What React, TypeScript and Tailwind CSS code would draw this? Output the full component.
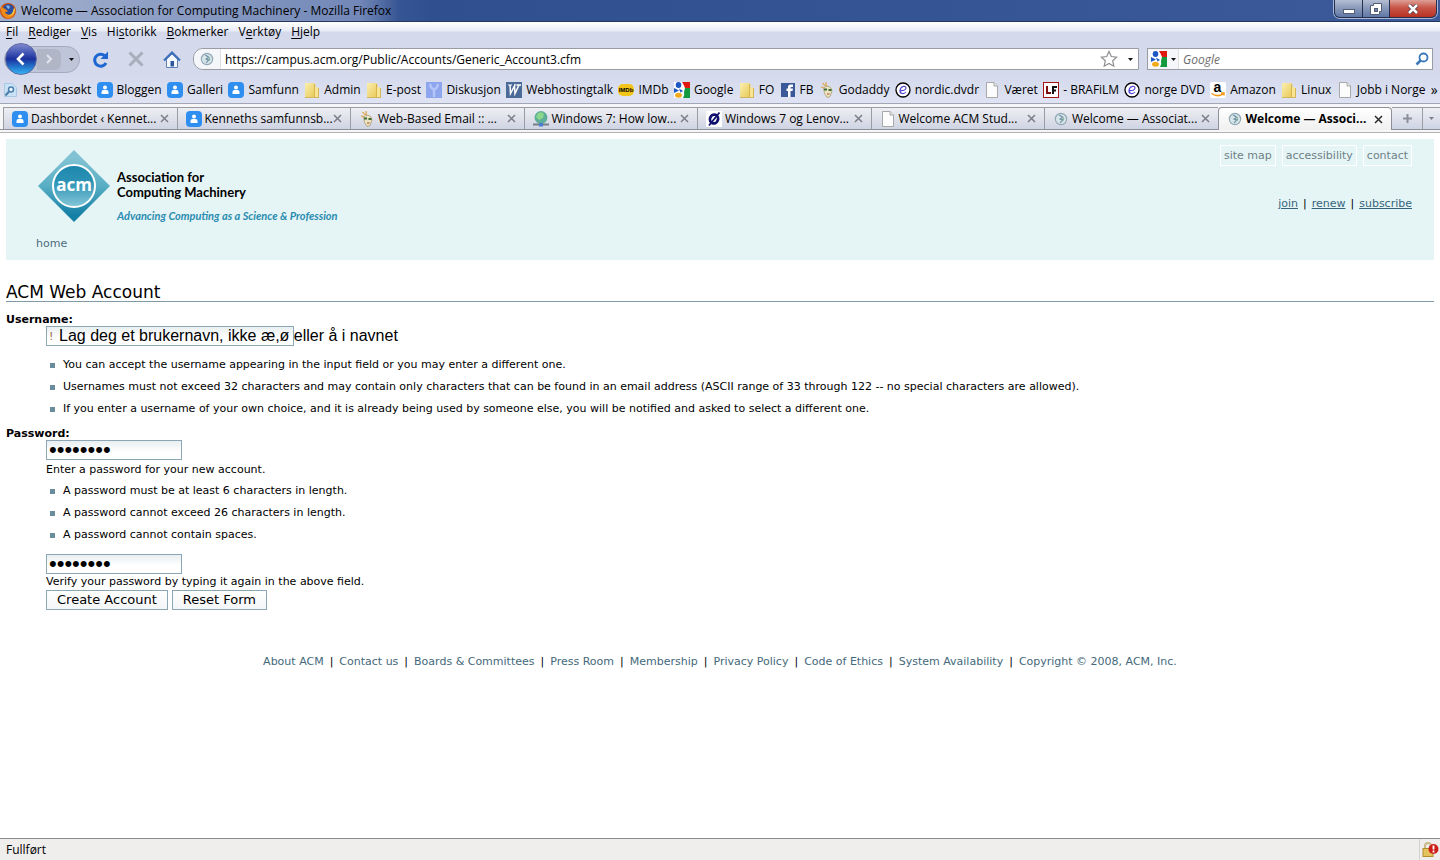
import type { ReactNode } from "react";

/* ---------- small icons ---------- */

function FirefoxIcon() {
  return (
    <svg width="16" height="16" viewBox="0 0 16 16">
      <circle cx="8" cy="8" r="8" fill="#c9510f" />
      <circle cx="8.500" cy="6.500" r="5.500" fill="#2b4f9e" />
      <path d="M6 3c2-1 4 0 4 1s-1 2-2 2z" fill="#7fb2e8" />
      <path d="M1 3C0 8 2 14 8 15.500c5-.5 8-5 7-10-1 3-2 5-4.500 6C8 12 5.500 11 5 9l3-.5c0-1.500-2-1-2.500-2.500C4 5.500 2.500 5 1 3z" fill="#f08a1c" />
      <path d="M15 5c0 5-3 8-7 8 3-1 5-3 5.500-7z" fill="#fbd04a" />
    </svg>
  );
}

function PersonIcon() {
  return (
    <svg width="16" height="16" viewBox="0 0 16 16">
      <rect width="16" height="16" rx="4" fill="#2f8ff0" />
      <circle cx="8" cy="5.500" r="2" fill="#fff" />
      <path d="M4.500 12V10Q4.500 8 6.500 8h3Q11.500 8 11.500 10v2z" fill="#fff" />
    </svg>
  );
}

function FolderIcon() {
  return (
    <svg width="16" height="16" viewBox="0 0 16 16">
      <defs>
        <linearGradient id="folder" x1="0" y1="0" x2="1" y2="1">
          <stop offset="0" stopColor="#fbefb0" />
          <stop offset="1" stopColor="#e8c955" />
        </linearGradient>
      </defs>
      <path d="M1 1h9l1.500 1.500V15H1z" fill="url(#folder)" />
      <path d="M10 6l3-1 1.500 1v9H10z" fill="#f7e593" />
      <path d="M1 15.500h14M10.500 2v13M14.500 6v9" stroke="#cfa93c" strokeWidth=".8" fill="none" />
    </svg>
  );
}

function PageIcon() {
  return (
    <svg width="16" height="16" viewBox="0 0 16 16">
      <path d="M2.500 .5h7.500l3.500 3.500v11.500h-11z" fill="#fcfcfc" stroke="#a9a9a9" />
      <path d="M10 .5v3.500h3.500" fill="#e6e6e6" stroke="#a9a9a9" />
    </svg>
  );
}

function SearchPageIcon() {
  return (
    <svg width="16" height="16" viewBox="0 0 16 16">
      <path d="M1.500 1.500h8l4 4v9h-12z" fill="#c9e2f6" stroke="#a9c8e2" />
      <circle cx="8" cy="7.500" r="2.500" fill="#e9f5fd" stroke="#4d7fae" strokeWidth="1.500" />
      <path d="M6 9.500L2.500 13.500" stroke="#4d7fae" strokeWidth="2" />
    </svg>
  );
}

function YIcon() {
  return (
    <svg width="16" height="16" viewBox="0 0 16 16">
      <rect width="16" height="16" fill="#8da6ee" />
      <path d="M4 2q1 5 4 5.500Q11 7 12 2M8 7.500V15" stroke="#b5c5f8" strokeWidth="2.500" fill="none" />
    </svg>
  );
}

function WIcon() {
  return (
    <svg width="16" height="16" viewBox="0 0 16 16">
      <rect width="16" height="16" fill="#4c6a98" />
      <path d="M2 3h4M8 3h3" stroke="#fff" />
      <path d="M4 3l.5 8.500L8.500 4l.5 7.500L13 3M11 3h4" stroke="#fff" strokeWidth="1.500" fill="none" />
    </svg>
  );
}

function ImdbIcon() {
  return (
    <svg width="16" height="16" viewBox="0 0 16 16" className="overflow-visible">
      <rect y="2" width="16" height="12" rx="5" fill="#f3c518" />
      <text x="8" y="10" textAnchor="middle" fontSize="6" fontWeight="900" fontFamily="Liberation Sans, sans-serif">IMDb</text>
    </svg>
  );
}

function GoogleIcon() {
  return (
    <svg width="16" height="16" viewBox="0 0 16 16">
      <rect width="16" height="16" fill="#fff" />
      <path d="M8 0h8v6h-5q-1-3-3-6z" fill="#e0190f" />
      <path d="M11 6h5v10H9q2-3 1-6z" fill="#139a3f" />
      <ellipse cx="4.500" cy="3" rx="2.800" ry="3" fill="#1c57c4" />
      <path d="M0 6l5 2.500L0 11z" fill="#1c57c4" />
      <path d="M5 6.500l4 2.500-2.500 1.500z" fill="#1c57c4" />
      <ellipse cx="4.500" cy="13.300" rx="3.500" ry="2.500" fill="#f2ab1c" />
    </svg>
  );
}

function FacebookIcon() {
  return (
    <svg width="16" height="16" viewBox="0 0 16 16">
      <rect x="1" y="1" width="14" height="14" fill="#3b5998" />
      <path d="M8 15V9H6.500V6.500H8V5q0-2.500 2.500-2.500H13V5h-1.500q-1 0-1 1v.5H13L12.500 9h-2v6z" fill="#fff" />
    </svg>
  );
}

function GodaddyIcon() {
  return (
    <svg width="16" height="16" viewBox="0 0 16 16">
      <path d="M3.500 1l3 3M7 0l.5 4M2 5l4 1" stroke="#e0b06a" strokeWidth="1.500" />
      <path d="M4.500 6q4-3.500 7.500 0l1 3-2 5.500-3 1-2.500-4z" fill="#ece3c2" stroke="#a89b70" strokeWidth=".8" />
      <path d="M5 7.500h3M9.500 8h3" stroke="#3f6b35" strokeWidth="2.200" />
      <path d="M8 12h2.500" stroke="#a64b2a" />
    </svg>
  );
}

function CircleEIcon() {
  return (
    <svg width="16" height="16" viewBox="0 0 16 16">
      <circle cx="8" cy="8" r="7" fill="#fff" stroke="#000" strokeWidth="1.300" />
      <path d="M5 8.500c3 .5 6-.5 6-2.500 0-3-5.500-2-6 2.500-.3 3.500 4 4 6 1.500" fill="none" stroke="#5348d8" strokeWidth="1.200" />
    </svg>
  );
}

function LfIcon() {
  return (
    <svg width="16" height="16" viewBox="0 0 16 16">
      <rect x=".5" y=".5" width="15" height="15" fill="#fff" stroke="#a51616" />
      <path d="M4 4v7h4" fill="none" stroke="#7c0f10" strokeWidth="2" />
      <path d="M10 12V5h4M10 8.500h3" fill="none" stroke="#111" strokeWidth="2" />
    </svg>
  );
}

function AmazonIcon() {
  return (
    <svg width="16" height="16" viewBox="0 0 16 16" className="overflow-visible">
      <rect width="16" height="16" rx="2" fill="#fff" />
      <text x="7.500" y="10" textAnchor="middle" fontSize="14" fontWeight="bold" fontFamily="Liberation Sans, sans-serif">a</text>
      <path d="M1.500 11.500q6 4 11.500 .5M11 11h3v2.500" fill="none" stroke="#f39b1a" strokeWidth="1.500" />
    </svg>
  );
}

function GlobeIcon() {
  return (
    <svg width="16" height="16" viewBox="0 0 16 16">
      <circle cx="8" cy="6.500" r="6.500" fill="#5fae9b" />
      <path d="M5 2q4-2 6 1l-1 4-4 2-3-3z" fill="#8ad68a" />
      <path d="M0 13.500h16" stroke="#777f86" strokeWidth="2" />
      <rect x="6" y="12" width="4" height="3.500" fill="#4a7fd0" />
    </svg>
  );
}

function SlashIcon() {
  return (
    <svg width="16" height="16" viewBox="0 0 16 16">
      <rect width="16" height="16" fill="#fff" />
      <ellipse cx="8" cy="8" rx="4" ry="4.500" fill="none" stroke="#10106e" strokeWidth="2.800" transform="rotate(20 8 8)" />
      <path d="M13.500 1.500L3 14.500" stroke="#10106e" strokeWidth="1.800" />
    </svg>
  );
}

function AcmIcon() {
  return (
    <svg width="14" height="14" viewBox="0 0 16 16" className="mx-px shrink-0">
      <circle cx="8" cy="8" r="6.500" fill="#d7e4ea" stroke="#93a8b5" strokeWidth="1.300" />
      <path d="M6 3.500l4 2.500-3 2 3 1-3 3.500" fill="none" stroke="#6c8fa0" strokeWidth="1.300" />
      <path d="M10 5l2 3-2 3z" fill="#8fb4a6" />
    </svg>
  );
}

function CloseIcon({ dark = false }: { dark?: boolean }) {
  return (
    <svg width="9" height="9" viewBox="0 0 9 9">
      <path d="M1 1l7 7M8 1L1 8" stroke={dark ? "#2a2a2a" : "#7b7e86"} strokeWidth="1.500" />
    </svg>
  );
}

function Caret({ color = "#111" }: { color?: string }) {
  return (
    <svg width="5" height="3" viewBox="0 0 5 3">
      <path d="M0 0h5L2.500 3z" fill={color} />
    </svg>
  );
}

/* ---------- data ---------- */

const menu = [
  ["", "F", "il"],
  ["", "R", "ediger"],
  ["", "V", "is"],
  ["Hi", "s", "torikk"],
  ["", "B", "okmerker"],
  ["V", "e", "rktøy"],
  ["", "H", "jelp"],
];

const bookmarks: { icon: ReactNode; label: string }[] = [
  { icon: <SearchPageIcon />, label: "Mest besøkt" },
  { icon: <PersonIcon />, label: "Bloggen" },
  { icon: <PersonIcon />, label: "Galleri" },
  { icon: <PersonIcon />, label: "Samfunn" },
  { icon: <FolderIcon />, label: "Admin" },
  { icon: <FolderIcon />, label: "E-post" },
  { icon: <YIcon />, label: "Diskusjon" },
  { icon: <WIcon />, label: "Webhostingtalk" },
  { icon: <ImdbIcon />, label: "IMDb" },
  { icon: <GoogleIcon />, label: "Google" },
  { icon: <FolderIcon />, label: "FO" },
  { icon: <FacebookIcon />, label: "FB" },
  { icon: <GodaddyIcon />, label: "Godaddy" },
  { icon: <CircleEIcon />, label: "nordic.dvdr" },
  { icon: <PageIcon />, label: "Været" },
  { icon: <LfIcon />, label: "- BRAFiLM" },
  { icon: <CircleEIcon />, label: "norge DVD" },
  { icon: <AmazonIcon />, label: "Amazon" },
  { icon: <FolderIcon />, label: "Linux" },
  { icon: <PageIcon />, label: "Jobb i Norge" },
];

const tabs: { icon: ReactNode; label: string; active?: boolean }[] = [
  { icon: <PersonIcon />, label: "Dashbordet ‹ Kennet..." },
  { icon: <PersonIcon />, label: "Kenneths samfunnsb..." },
  { icon: <GodaddyIcon />, label: "Web-Based Email :: ..." },
  { icon: <GlobeIcon />, label: "Windows 7: How low..." },
  { icon: <SlashIcon />, label: "Windows 7 og Lenov..." },
  { icon: <PageIcon />, label: "Welcome ACM Stud..." },
  { icon: <AcmIcon />, label: "Welcome — Associat..." },
  { icon: <AcmIcon />, label: "Welcome — Associ...", active: true },
];

const footerLinks = [
  "About ACM",
  "Contact us",
  "Boards & Committees",
  "Press Room",
  "Membership",
  "Privacy Policy",
  "Code of Ethics",
  "System Availability",
  "Copyright © 2008, ACM, Inc.",
];

/* ---------- browser chrome ---------- */

function TitleBar() {
  return (
    <div className="flex h-[22px] items-start justify-between border-b border-[#26365f] bg-linear-to-r from-[#8698bd] via-[#2f4f8f] via-30% to-[#3c5a9a]">
      <div className="flex h-[21px] items-center gap-[5px] bg-linear-to-r from-[#a3b1ce] via-[#7388b8] via-90% to-transparent pr-2">
        <FirefoxIcon />
        <span className="whitespace-nowrap">Welcome — Association for Computing Machinery - Mozilla Firefox</span>
      </div>
      <div className="mr-[3px] flex h-[18px] overflow-hidden rounded-b-md border border-t-0 border-[#24304e] shadow-[0_0_0_1px_#a9b8d6]">
        <button aria-label="Minimer" className="flex w-7 items-center justify-center border-r border-[#24304e] bg-linear-to-b from-[#b4bfd3] via-[#8b9bbb] via-45% to-[#6078a6]">
          <svg width="12" height="12" viewBox="0 0 12 12"><rect x=".5" y="6.500" width="11" height="4" fill="#fff" stroke="#545f75" /></svg>
        </button>
        <button aria-label="Gjenopprett" className="flex w-[27px] items-center justify-center border-r border-[#24304e] bg-linear-to-b from-[#b4bfd3] via-[#8b9bbb] via-45% to-[#6078a6]">
          <svg width="12" height="12" viewBox="0 0 12 12"><path d="M3.500 .5h8v8h-2v3h-9v-9h3z" fill="#fff" stroke="#545f75" /><rect x="4.500" y="5.500" width="3" height="3" fill="#7184a9" stroke="#545f75" /></svg>
        </button>
        <button aria-label="Lukk" className="flex w-[46px] items-center justify-center bg-linear-to-b from-[#dd9f96] via-[#c85548] via-45% to-[#b8301f]">
          <svg width="12" height="10" viewBox="0 0 12 10"><path d="M2 1l8 8M10 1L2 9" stroke="#4c3440" strokeWidth="4" /><path d="M2 1l8 8M10 1L2 9" stroke="#fff" strokeWidth="2.500" /></svg>
        </button>
      </div>
    </div>
  );
}

function MenuBar() {
  return (
    <nav className="flex h-5 items-center gap-2.5 bg-linear-to-b from-white via-[#e8ecf7] via-45% to-[#d4daec] to-50% px-1.5">
      {menu.map(([before, key, after]) => (
        <button key={after}>
          {before}
          <span className="underline underline-offset-2">{key}</span>
          {after}
        </button>
      ))}
    </nav>
  );
}

function NavBar() {
  return (
    <div className="flex h-[34px] items-center pr-[7px] pl-1">
      <div className="flex h-[27px] w-[76px] items-center rounded-full border border-[#a4aabd] bg-[#bec5d9]">
        <button aria-label="Tilbake" className="flex size-8 shrink-0 items-center justify-center rounded-full border border-[#5b67a0] bg-linear-to-b from-[#8188d0] via-[#1c2f9e] via-50% to-[#37b4f4]">
          <svg width="14" height="14" viewBox="0 0 14 14"><path d="M9.500 1.500L4 7l5.500 5.500" fill="none" stroke="#fff" strokeWidth="2.600" /></svg>
        </button>
        <button aria-label="Fram" className="flex h-[21px] w-6 items-center justify-center rounded-r-md bg-[#b0b6c6]">
          <svg width="10" height="10" viewBox="0 0 10 10"><path d="M3 1l4 4-4 4" fill="none" stroke="#dfe3ee" strokeWidth="2" /></svg>
        </button>
        <button aria-label="Logg" className="ml-2"><Caret /></button>
      </div>
      <button aria-label="Oppdater" className="ml-3 w-4">
        <svg width="16" height="17" viewBox="0 0 16 17">
          <path d="M12.500 4.500A6 6 0 1 0 14 12" fill="none" stroke="#1e66d0" strokeWidth="3" />
          <path d="M16 .5v7.500H8.500z" fill="#1e66d0" />
        </svg>
      </button>
      <button aria-label="Stopp" className="ml-5 w-4">
        <svg width="16" height="16" viewBox="0 0 16 16"><path d="M1.500 1.500l13 13M14.500 1.500l-13 13" stroke="#a9aebb" strokeWidth="3" /></svg>
      </button>
      <button aria-label="Hjem" className="ml-[19px] w-[18px]">
        <svg width="18" height="17" viewBox="0 0 18 17">
          <path d="M3.500 8v8.500h11V8L9 3z" fill="#f4f7fc" stroke="#5e7fb8" />
          <path d="M1 9.500L9 1.500l8 8" fill="none" stroke="#3f70bb" strokeWidth="2.200" />
          <rect x="7.500" y="10" width="3.500" height="5.500" fill="#2c56a0" />
        </svg>
      </button>
      <div className="ml-3 flex h-[22px] min-w-0 flex-1 items-center rounded-l-[10px] border border-[#9a9ca4] bg-white pr-1">
        <span className="flex h-full w-[27px] shrink-0 items-center justify-center rounded-l-[10px] border-r border-[#e0e0e4] bg-[#f5f6f9]"><AcmIcon /></span>
        <input aria-label="Adresse" className="h-full min-w-0 flex-1 pl-1 outline-none" defaultValue="https://campus.acm.org/Public/Accounts/Generic_Account3.cfm" />
        <button aria-label="Bokmerk denne siden">
          <svg width="18" height="18" viewBox="0 0 18 18"><path d="M9 1.500l2.300 5 5.400.6-4 3.700 1.100 5.400L9 13.500l-4.800 2.700 1.100-5.400-4-3.700 5.400-.6z" fill="#fff" stroke="#8d8d8d" strokeWidth="1.200" /></svg>
        </button>
        <button aria-label="Vis adresser" className="ml-2 flex w-2 justify-center"><Caret /></button>
      </div>
      <div className="ml-2 flex h-[22px] w-[286px] items-center border border-[#9a9ca4] bg-white pr-[3px]">
        <button aria-label="Velg søkemotor" className="flex h-full w-[31px] shrink-0 items-center gap-1 border-r border-[#e0e0e4] bg-[#f5f6f9] pl-[3px]">
          <GoogleIcon />
          <Caret />
        </button>
        <input aria-label="Søk" placeholder="Google" className="h-full min-w-0 flex-1 pl-1 italic outline-none placeholder:text-[#6d6d6d]" />
        <button aria-label="Søk på nettet">
          <svg width="14" height="14" viewBox="0 0 14 14"><circle cx="8.500" cy="5.500" r="4" fill="none" stroke="#3a78b8" strokeWidth="1.800" /><path d="M5.500 8.500L1.500 12.500" stroke="#3a78b8" strokeWidth="2.500" /></svg>
        </button>
      </div>
    </div>
  );
}

function BookmarksBar() {
  return (
    <div className="flex h-[28px] items-center justify-between border-b border-[#a2a6b2] bg-linear-to-b from-[#d4daec] to-[#dfe3f3] pr-0.5 pl-[3px]">
      {bookmarks.map(({ icon, label }, i) => (
        <a key={i} href="#" className="flex items-center gap-1 whitespace-nowrap">
          {icon}
          {label}
        </a>
      ))}
      <button aria-label="Flere bokmerker" className="text-sm">»</button>
    </div>
  );
}

function TabStrip() {
  return (
    <div className="flex h-[29px] flex-col border-b border-[#b2b2b2] bg-[#f6f6f8] pt-[3px]">
      <div className="flex h-[23px] border-b border-[#8f9097] pl-[3px]">
        {tabs.map(({ icon, label, active }, i) => (
          <div
            key={i}
            className={
              active
                ? "-mb-px flex min-w-0 flex-1 items-center rounded-t-sm border border-b-0 border-[#8f9097] bg-linear-to-b from-white to-[#f0f0f0] px-2 font-bold"
                : "flex min-w-0 flex-1 items-center border-t border-l border-[#9a9ca4] bg-linear-to-b from-[#eeeff4] via-[#dfe1ea] via-50% to-[#cfd4e4] px-2"
            }
          >
            {icon}
            <span className="ml-[3px] min-w-0 flex-1 whitespace-nowrap">{label}</span>
            <button aria-label="Lukk fane"><CloseIcon dark={active} /></button>
          </div>
        ))}
        <button aria-label="Ny fane" className="flex w-[31px] items-center justify-center border-t border-r border-[#9a9ca4] bg-linear-to-b from-[#eeeff4] to-[#cfd4e4]">
          <svg width="9" height="9" viewBox="0 0 9 9"><path d="M4.500 0v9M0 4.500h9" stroke="#8b8f99" strokeWidth="2" /></svg>
        </button>
        <button aria-label="Vis alle faner" className="flex w-[17px] items-center justify-center border-t border-[#9a9ca4] bg-linear-to-b from-[#eeeff4] to-[#cfd4e4]">
          <Caret color="#7b7e86" />
        </button>
      </div>
    </div>
  );
}

/* ---------- page ---------- */

function AcmLogo() {
  return (
    <svg width="72" height="72" viewBox="0 0 72 72">
      <defs>
        <linearGradient id="diamond" x1="0" y1="0" x2="0" y2="1">
          <stop offset="0.100" stopColor="#82c3d3" />
          <stop offset="0.500" stopColor="#58aec4" />
          <stop offset="0.900" stopColor="#1580a6" />
        </linearGradient>
        <linearGradient id="disc" x1="0" y1="0" x2="0" y2="1">
          <stop offset="0" stopColor="#1c86ad" />
          <stop offset="0.400" stopColor="#2c93b5" />
          <stop offset="1" stopColor="#86c6d8" />
        </linearGradient>
      </defs>
      <path d="M36 0l36 36-36 36L0 36z" fill="url(#diamond)" />
      <circle cx="36" cy="36" r="21" fill="url(#disc)" stroke="#fff" strokeWidth="2" />
      <text x="36" y="41" textAnchor="middle" fontSize="17" fontWeight="bold" fontFamily="Open Sans, sans-serif" fill="#fff">acm</text>
    </svg>
  );
}

function SiteHeader() {
  return (
    <header className="flex h-[121px] justify-between bg-[#e5f5f6] pr-[22px] pl-[30px] text-[#4b6c7c]">
      <div className="flex flex-col pt-[11px]">
        <div className="flex items-start gap-[7px] pl-0.5">
          <AcmLogo />
          <div className="pt-5 font-['Lato']">
            <p className="text-[13px] leading-[15px] font-bold text-black">
              Association for
              <br />
              Computing Machinery
            </p>
            <p className="mt-2 text-[11px] leading-4 font-bold text-[#2a8cb0] italic">Advancing Computing as a Science &amp; Profession</p>
          </div>
        </div>
        <a href="#" className="mt-3">home</a>
      </div>
      <div className="flex flex-col items-end pt-1.5">
        <div className="flex gap-1.5 text-[#6f7f86]">
          <a href="#" className="border border-white px-[3px] leading-[19px]">site map</a>
          <a href="#" className="border border-white px-[3px] leading-[19px]">accessibility</a>
          <a href="#" className="border border-white px-[3px] leading-[19px]">contact</a>
        </div>
        <div className="mt-[30px] flex gap-[5px] text-black">
          <a href="#" className="text-[#35647c] underline">join</a>|
          <a href="#" className="text-[#35647c] underline">renew</a>|
          <a href="#" className="text-[#35647c] underline">subscribe</a>
        </div>
      </div>
    </header>
  );
}

function Rules({ items }: { items: string[] }) {
  return (
    <ul>
      {items.map((item) => (
        <li key={item} className="flex h-[22px] items-center gap-2 pl-1">
          <span className="size-[5px] bg-[#6a8d9c]" />
          {item}
        </li>
      ))}
    </ul>
  );
}

const fieldClass = "block h-5 border border-[#8ba6b5] bg-linear-to-b from-[#e8eef0] to-white to-60% px-0.5 outline-none";
const passwordClass = `${fieldClass} w-[136px] font-['Liberation_Sans'] text-[22px]`;
const buttonClass = "h-5 border border-[#8ba6b5] bg-linear-to-b from-white to-[#f3f5f6] px-2.5 text-[13px] leading-4";

function AccountForm() {
  return (
    <form>
      <h1 className="mt-5 border-b border-[#7f9aa9] pt-1 text-[17px] leading-[17px]">ACM Web Account</h1>
      <label htmlFor="username" className="mt-3 block leading-3 font-bold">Username:</label>
      <div className="pl-10">
        <div className="relative">
          <input id="username" defaultValue="!" className={`${fieldClass} w-[248px] text-[#a06a48]`} />
          <span className="pointer-events-none absolute top-0 left-[13px] font-['Liberation_Sans'] text-base leading-5 whitespace-nowrap">
            Lag deg et brukernavn, ikke æ,ø eller å i navnet
          </span>
        </div>
        <div className="mt-2">
          <Rules
            items={[
              "You can accept the username appearing in the input field or you may enter a different one.",
              "Usernames must not exceed 32 characters and may contain only characters that can be found in an email address (ASCII range of 33 through 122 -- no special characters are allowed).",
              "If you enter a username of your own choice, and it is already being used by someone else, you will be notified and asked to select a different one.",
            ]}
          />
        </div>
      </div>
      <label htmlFor="password" className="mt-2 block leading-3 font-bold">Password:</label>
      <div className="pl-10">
        <input id="password" type="password" defaultValue="password" className={passwordClass} />
        <p className="leading-5">Enter a password for your new account.</p>
        <Rules
          items={[
            "A password must be at least 6 characters in length.",
            "A password cannot exceed 26 characters in length.",
            "A password cannot contain spaces.",
          ]}
        />
        <input id="verify" type="password" defaultValue="password" className={`${passwordClass} mt-2`} />
        <label htmlFor="verify" className="block leading-4">Verify your password by typing it again in the above field.</label>
        <div className="flex gap-1">
          <button type="button" className={buttonClass}>Create Account</button>
          <button type="reset" className={buttonClass}>Reset Form</button>
        </div>
      </div>
    </form>
  );
}

function Footer() {
  return (
    <footer className="mt-11 flex justify-center gap-1.5">
      {footerLinks.map((label, i) => (
        <span key={label} className="flex gap-1.5">
          {i > 0 && <span>|</span>}
          <a href="#" className="text-[#44697b]">{label}</a>
        </span>
      ))}
    </footer>
  );
}

export default function App() {
  return (
    <div className="flex min-h-screen flex-col bg-white font-['Open_Sans',sans-serif] text-xs text-black">
      <div className="bg-[#d4daec]">
        <TitleBar />
        <MenuBar />
        <NavBar />
        <BookmarksBar />
        <TabStrip />
      </div>
      <main className="flex-1 px-1.5 pt-1.5 font-['DejaVu_Sans',sans-serif] text-[11px] leading-4">
        <SiteHeader />
        <AccountForm />
        <Footer />
      </main>
      <div className="flex h-[22px] items-center justify-between border-t border-[#8c8c8c] bg-[#f0eded] pl-1.5">
        <span>Fullført</span>
        <span className="flex h-full w-[21px] items-center justify-center border-l border-[#d6d2d2]">
          <svg width="17" height="16" viewBox="0 0 17 16">
            <path d="M3 7V4q0-3 3-3t3 3" fill="none" stroke="#c6b98a" strokeWidth="2" />
            <rect x="1" y="6.500" width="10" height="8" fill="#e4c25c" stroke="#b08f2c" />
            <circle cx="11.500" cy="7" r="5" fill="#cc1f1a" />
            <path d="M11.500 3.500v4M11.500 8.500v2" stroke="#fff" strokeWidth="1.800" />
          </svg>
        </span>
      </div>
    </div>
  );
}
